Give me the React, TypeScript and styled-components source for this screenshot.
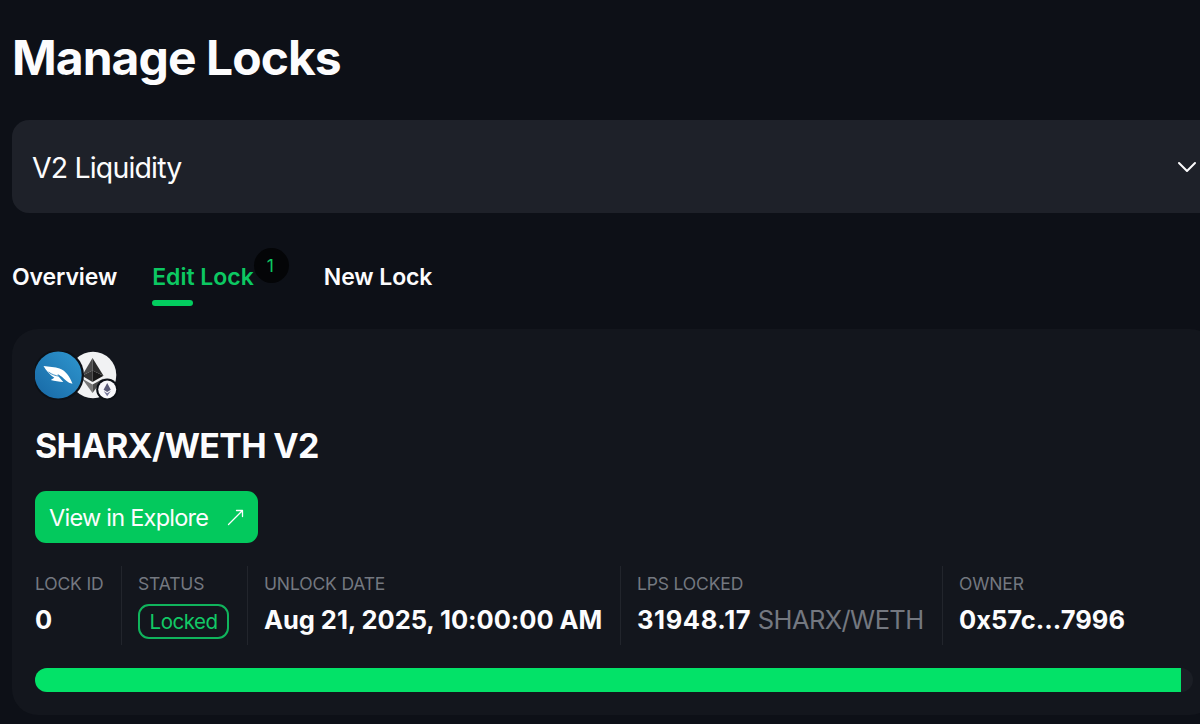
import styled, { createGlobalStyle } from "styled-components";

// ------ Styled ------ //
const GlobalStyle = createGlobalStyle`
  * {
    box-sizing: border-box;
  }
  body {
    margin: 0;
    overflow: hidden;
    background-color: #0d1017;
    color: #fcfcfd;
    font-family: Inter, "Liberation Sans", sans-serif;
  }
`;
const Wrapper = styled.main`
  width: 1216px;
  height: 724px;
  padding: 28px 0 0 12px;
  overflow: hidden;
`;
const Title = styled.h1`
  margin: 0 0 32px;
  height: 60px;
  line-height: 60px;
  font-size: 48px;
  font-weight: 700;
  letter-spacing: -0.95px;
`;
const Select = styled.button`
  display: flex;
  justify-content: space-between;
  align-items: center;
  width: 100%;
  height: 93px;
  padding: 1px 19px 0 20px;
  border: none;
  border-radius: 17px;
  background-color: #1e2129;
  color: inherit;
  font-family: inherit;
  font-size: 28.5px;
  letter-spacing: -0.85px;
  text-align: left;
  cursor: pointer;
`;
const Tabs = styled.nav`
  display: flex;
  align-items: flex-start;
  gap: 35px;
  height: 116px;
  padding-top: 48px;
`;
const Tab = styled.a<{ $active?: boolean }>`
  position: relative;
  height: 45px;
  line-height: 33px;
  font-size: 23px;
  font-weight: 640;
  letter-spacing: ${props => (props.$active ? "0" : "-0.1px")};
  color: ${props => (props.$active ? "#0cc862" : "inherit")};
  cursor: pointer;
  &::after {
    content: "";
    display: ${props => (props.$active ? "block" : "none")};
    width: 41px;
    height: 6px;
    margin-top: 6px;
    border-radius: 3px;
    background-color: #03cd5f;
  }
`;
const TabGroup = styled.div`
  position: relative;
  padding-right: 35px;
`;
const Count = styled.span`
  position: absolute;
  top: -13px;
  right: 0;
  width: 35px;
  height: 35px;
  border-radius: 50%;
  background-color: #040507;
  color: #0cc862;
  font-size: 17.5px;
  line-height: 35px;
  text-indent: -2px;
  text-align: center;
`;
const Card = styled.section`
  height: 386px;
  padding: 22px 23px 0;
  border-radius: 26px;
  background-color: #13161d;
`;
const Logos = styled.svg`
  display: block;
  width: 84px;
  height: 49px;
`;
const PairName = styled.h2`
  margin: 24px 0 24px;
  height: 43px;
  line-height: 43px;
  font-size: 34px;
  font-weight: 700;
  letter-spacing: -0.7px;
`;
const ExploreButton = styled.button`
  display: flex;
  align-items: center;
  justify-content: space-between;
  width: 223px;
  height: 52px;
  padding: 1px 14px 0 14px;
  border: none;
  border-radius: 11px;
  background-color: #03c95d;
  color: #fcfcfd;
  font-family: inherit;
  font-size: 23.5px;
  letter-spacing: -0.75px;
  cursor: pointer;
`;
const Stats = styled.div`
  display: flex;
  height: 79px;
  margin-top: 23px;
`;
const Stat = styled.div<{ $width: number }>`
  width: ${props => props.$width}px;
  padding-left: 16px;
  border-left: 1px solid #22252c;
  white-space: nowrap;
  &:first-child {
    padding-left: 0;
    border-left: none;
  }
`;
const Label = styled.div`
  height: 36px;
  line-height: 36px;
  color: #747880;
  font-size: 17.5px;
  letter-spacing: -0.15px;
`;
const Value = styled.div<{ $spacing?: number }>`
  height: 36px;
  line-height: 36px;
  font-size: 25.5px;
  font-weight: 650;
  letter-spacing: ${props => props.$spacing ?? 0}px;
  span {
    color: #747880;
    font-weight: 400;
    letter-spacing: -0.6px;
  }
`;
const Status = styled.div`
  display: inline-block;
  width: 91px;
  height: 35px;
  margin-top: 2px;
  border: 2px solid #10b45c;
  border-radius: 11px;
  color: #12c966;
  font-size: 20.5px;
  letter-spacing: -0.5px;
  line-height: 32px;
  text-align: center;
`;
const Track = styled.div`
  height: 24px;
  margin-top: 23px;
  border-radius: 12px;
  background-color: #1b1e25;
  overflow: hidden;
`;
const Progress = styled.div`
  width: 1146px;
  height: 100%;
  background-color: #03e268;
`;

function PairLogos() {
  return (
    <Logos viewBox="0 0 84 49">
      <defs>
        <linearGradient id="sharx" x1="0" y1="1" x2="1" y2="0">
          <stop offset="0" stopColor="#1767a4" />
          <stop offset="1" stopColor="#2f97cf" />
        </linearGradient>
      </defs>
      <circle cx="58" cy="24" r="23.3" fill="#f1f2f3" />
      <path d="M57.5 7 L47 24.8 L57.5 19.5Z" fill="#4a4a4a" />
      <path d="M57.5 7 L68.5 24.8 L57.5 19.5Z" fill="#2b2b2b" />
      <path d="M47 24.8 L57.5 19.5 V31Z" fill="#343434" />
      <path d="M68.5 24.8 L57.5 19.5 V31Z" fill="#181818" />
      <path d="M47 27.5 L57.5 33.5 V42Z" fill="#777" />
      <path d="M68.5 27.5 L57.5 33.5 V42Z" fill="#4b4b4b" />
      <circle cx="23.5" cy="24" r="25.5" fill="#0c1016" />
      <circle cx="23.2" cy="24" r="23.5" fill="url(#sharx)" />
      <path
        d="M8.5 15 C14 16 20 15.5 24.5 17.5 C31 20 34.5 25 37.5 32.8 C35 32.3 33 31.3 31.3 29.8 C28.5 27.2 26 24.8 22.5 23 L24 26 L28.3 31 C24 30.8 20 30.2 15.8 29 L19.3 26.8 C14.5 23.5 11 19.5 8.5 15Z"
        fill="#fff"
      />
      <path d="M13.5 21 C17 23.7 20.5 24.7 24.5 25.2" stroke="#2f86bf" strokeWidth="0.9" fill="none" />
      <circle cx="72.2" cy="38.5" r="11" fill="#0c1016" />
      <circle cx="72.2" cy="38.5" r="9" fill="#f8f8fb" />
      <path d="M72.2 32 L68.6 38.8 L72.2 41 L75.8 38.8Z" fill="#5a5b78" />
      <path d="M68.6 40 L72.2 42.2 L75.8 40 L72.2 45.2Z" fill="#77789a" />
    </Logos>
  );
}

function App() {
  return (
    <>
      <GlobalStyle />
      <Wrapper>
        <Title>Manage Locks</Title>
        <Select>
          V2 Liquidity
          <svg width="20" height="12" viewBox="0 0 20 12" fill="none">
            <path d="M2 2 L10 10 L18 2" stroke="#fcfcfd" strokeWidth="2" strokeLinecap="round" strokeLinejoin="round" />
          </svg>
        </Select>

        <Tabs>
          <Tab>Overview</Tab>
          <TabGroup>
            <Tab $active>Edit Lock</Tab>
            <Count>1</Count>
          </TabGroup>
          <Tab>New Lock</Tab>
        </Tabs>

        <Card>
          <PairLogos />
          <PairName>SHARX/WETH V2</PairName>
          <ExploreButton>
            View in Explore
            <svg width="17" height="17" viewBox="0 0 17 17" fill="none">
              <path d="M1.5 15.5 L15.5 1.5 M9.5 1.5 H15.5 V7.5" stroke="#fcfcfd" strokeWidth="1.3" strokeLinecap="round" strokeLinejoin="round" />
            </svg>
          </ExploreButton>
          <Stats>
            <Stat $width={86}>
              <Label>LOCK ID</Label>
              <Value>0</Value>
            </Stat>
            <Stat $width={126}>
              <Label>STATUS</Label>
              <Status>Locked</Status>
            </Stat>
            <Stat $width={373}>
              <Label>UNLOCK DATE</Label>
              <Value $spacing={-0.05}>Aug 21, 2025, 10:00:00 AM</Value>
            </Stat>
            <Stat $width={322}>
              <Label>LPS LOCKED</Label>
              <Value $spacing={0.6}>31948.17 <span>SHARX/WETH</span></Value>
            </Stat>
            <Stat $width={220}>
              <Label>OWNER</Label>
              <Value>0x57c...7996</Value>
            </Stat>
          </Stats>
          <Track>
            <Progress />
          </Track>
        </Card>
      </Wrapper>
    </>
  );
}

export default App;
